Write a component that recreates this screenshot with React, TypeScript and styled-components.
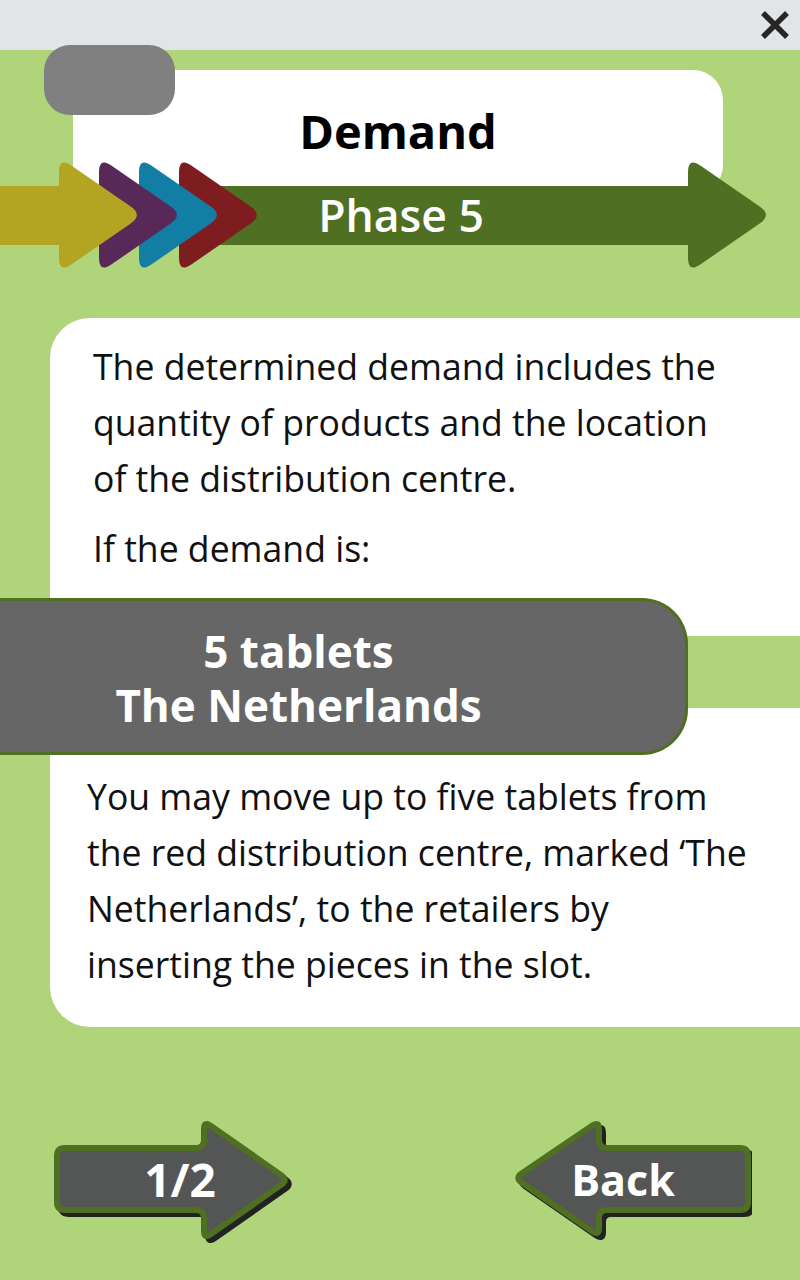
import React from "react";
import styled, { createGlobalStyle } from "styled-components";

const GlobalStyle = createGlobalStyle`
  html, body { margin: 0; padding: 0; }
  body { background: #afd47a; font-family: "Open Sans", "Noto Sans", sans-serif; }
  * { box-sizing: border-box; }
`;

const C = {
  bar: "#e1e5e8",
  green: "#afd47a",
  dark: "#4f6f22",
  olive: "#b3a422",
  purple: "#572858",
  teal: "#127ea4",
  red: "#7d1d1f",
  tab: "#808080",
  banner: "#666666",
  btn: "#545555",
};

type Pt = [number, number];

function rounded(pts: Pt[], r: number): string {
  const n = pts.length;
  let d = "";
  for (let i = 0; i < n; i++) {
    const p = pts[i];
    const prev = pts[(i - 1 + n) % n];
    const next = pts[(i + 1) % n];
    const l1 = Math.hypot(prev[0] - p[0], prev[1] - p[1]);
    const l2 = Math.hypot(next[0] - p[0], next[1] - p[1]);
    const a: Pt = [p[0] + ((prev[0] - p[0]) * r) / l1, p[1] + ((prev[1] - p[1]) * r) / l1];
    const b: Pt = [p[0] + ((next[0] - p[0]) * r) / l2, p[1] + ((next[1] - p[1]) * r) / l2];
    d += `${i === 0 ? "M" : "L"}${a[0].toFixed(1)},${a[1].toFixed(1)} Q${p[0]},${p[1]} ${b[0].toFixed(1)},${b[1].toFixed(1)} `;
  }
  return d + "Z";
}

const Page = styled.div`
  min-height: 100vh;
  display: flex;
  flex-direction: column;
  background: ${C.green};
  overflow: hidden;
`;

const TopBar = styled.header`
  height: 50px;
  background: ${C.bar};
  display: flex;
  justify-content: flex-end;
  align-items: flex-start;
  padding: 10px 10px 0 0;
`;

const CloseIcon = () => (
  <svg width="30" height="30" viewBox="0 0 30 30">
    <path d="M3 3 L27 27 M27 3 L3 27" stroke="#262626" strokeWidth="5.5" strokeLinecap="butt" />
  </svg>
);

const HeaderBlock = styled.section`
  position: relative;
  height: 225px;
  padding: 20px 0 0 73px;
`;

const TitleCard = styled.div`
  width: 650px;
  height: 125px;
  background: #fff;
  border-radius: 30px;
  display: flex;
  justify-content: center;
  padding-top: 38px;
`;

const Title = styled.h1`
  margin: 0;
  font-size: 47px;
  line-height: 1;
  font-weight: 700;
  color: #000;
`;

const Tab = styled.div`
  position: absolute;
  left: 44px;
  top: -5px;
  width: 131px;
  height: 70px;
  border-radius: 26px;
  background: ${C.tab};
`;

const PhaseArrow = styled.div`
  position: absolute;
  left: 0;
  top: 105px;
  width: 800px;
  height: 120px;
  svg { display: block; }
`;

const PhaseLabel = styled.div`
  position: absolute;
  left: 0;
  right: 0;
  top: 31px;
  height: 59px;
  display: flex;
  align-items: center;
  justify-content: center;
  padding-left: 2px;
  color: #fff;
  font-size: 44.5px;
  line-height: 1;
  font-weight: 600;
`;

const BodyCard = styled.section`
  margin: 43px 0 0 50px;
  background: #fff;
  border-radius: 40px 0 0 40px;
  padding: 20px 0 35px 0;
  color: #111;
  font-size: 35.6px;
  line-height: 56px;
`;

const Para = styled.p<{ $indent: number; $gap?: number }>`
  margin: ${(p) => p.$gap ?? 0}px 0 0 0;
  padding-left: ${(p) => p.$indent}px;
  white-space: nowrap;
`;

const BannerRow = styled.div`
  margin: 22px 0 0 -50px;
  background: linear-gradient(
    to bottom,
    transparent 38px,
    ${C.green} 38px,
    ${C.green} 110px,
    transparent 110px
  );
`;

const Banner = styled.div`
  width: 688px;
  height: 157px;
  background: ${C.banner};
  border: 3px solid ${C.dark};
  border-left: none;
  border-radius: 0 46px 46px 0;
  padding: 23px 88px 0 0;
  text-align: center;
  color: #fff;
  font-size: 44px;
  line-height: 54px;
  font-weight: 700;
`;

const Footer = styled.footer`
  margin-top: 91px;
  display: flex;
  justify-content: space-between;
  padding: 0 48px 0 53px;
`;

const NavButton = styled.button`
  position: relative;
  width: 240px;
  height: 128px;
  border: none;
  background: transparent;
  padding: 0;
  cursor: pointer;
  display: flex;
  align-items: center;
  justify-content: center;
  svg { position: absolute; inset: 0; }
`;

const NavLabel = styled.span<{ $shift: number; $size: number }>`
  position: relative;
  color: #fff;
  font-family: "Open Sans", sans-serif;
  font-weight: 700;
  font-size: ${(p) => p.$size}px;
  line-height: 1;
  transform: translate(${(p) => p.$shift}px, -3px);
`;

const rightArrow: Pt[] = [[4, 30], [151, 30], [151, 3], [235, 62], [151, 121], [151, 92], [4, 92]];
const leftArrow: Pt[] = [[3, 60], [87, 3], [87, 30], [236, 30], [236, 92], [87, 92], [87, 118]];

const ArrowShape = ({ pts }: { pts: Pt[] }) => {
  const d = rounded(pts, 8);
  return (
    <svg width="240" height="128" viewBox="0 0 240 128">
      <path d={d} transform="translate(4 4)" fill="#222" stroke="#222" strokeWidth="6" strokeLinejoin="round" />
      <path d={d} fill={C.btn} stroke={C.dark} strokeWidth="6" strokeLinejoin="round" />
    </svg>
  );
};

const head = (x: number, w = 84): Pt[] => [[x, 2], [x + w, 60], [x, 118]];

const PhaseDrawing = () => (
  <svg width="800" height="120" viewBox="0 0 800 120">
    <rect x="220" y="31" width="480" height="59" fill={C.dark} />
    <path d={rounded(head(688), 15)} fill={C.dark} />
    <path d={rounded(head(179), 15)} fill={C.red} />
    <path d={rounded(head(139), 15)} fill={C.teal} />
    <path d={rounded(head(99), 15)} fill={C.purple} />
    <rect x="-10" y="31" width="80" height="59" fill={C.olive} />
    <path d={rounded(head(59), 15)} fill={C.olive} />
  </svg>
);

export default function App() {
  return (
    <Page>
      <GlobalStyle />
      <TopBar>
        <CloseIcon />
      </TopBar>
      <HeaderBlock>
        <TitleCard>
          <Title>Demand</Title>
        </TitleCard>
        <Tab />
        <PhaseArrow>
          <PhaseDrawing />
          <PhaseLabel>Phase 5</PhaseLabel>
        </PhaseArrow>
      </HeaderBlock>
      <BodyCard>
        <Para $indent={43}>
          The determined demand includes the
          <br />
          quantity of products and the location
          <br />
          of the distribution centre.
        </Para>
        <Para $indent={43} $gap={14}>If the demand is:</Para>
        <BannerRow>
          <Banner>
            5 tablets
            <br />
            The Netherlands
          </Banner>
        </BannerRow>
        <Para $indent={37} $gap={13}>
          You may move up to five tablets from
          <br />
          the red distribution centre, marked ‘The
          <br />
          Netherlands’, to the retailers by
          <br />
          inserting the pieces in the slot.
        </Para>
      </BodyCard>
      <Footer>
        <NavButton>
          <ArrowShape pts={rightArrow} />
          <NavLabel $shift={7} $size={46}>1/2</NavLabel>
        </NavButton>
        <NavButton>
          <ArrowShape pts={leftArrow} />
          <NavLabel $shift={-9} $size={43}>Back</NavLabel>
        </NavButton>
      </Footer>
    </Page>
  );
}
